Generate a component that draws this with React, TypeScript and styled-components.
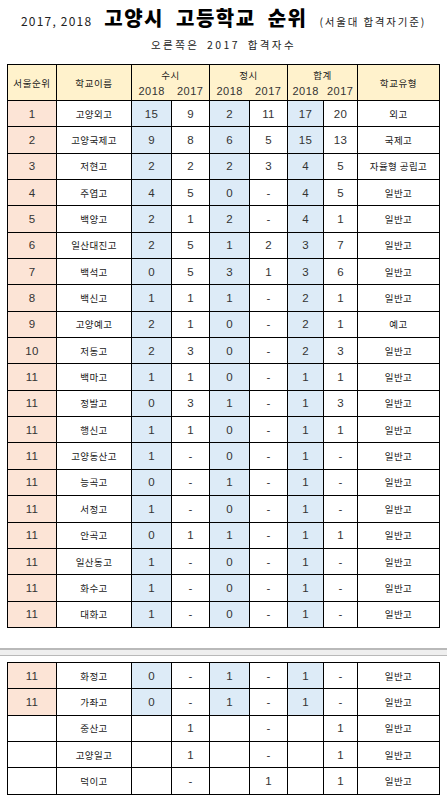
import React from "react";
import styled, { createGlobalStyle } from "styled-components";

type Tone = "rank" | "blue" | "plain";

type SchoolRow = {
    rank: string;
    name: string;
    values: string[]; // 수시18, 수시17, 정시18, 정시17, 합계18, 합계17
    kind: string;
    colored: boolean;
};

const row = (rank: string, name: string, values: string, kind: string, colored = true): SchoolRow => ({
    rank,
    name,
    values: values.split(" ").map(v => (v === "_" ? "" : v)),
    kind,
    colored,
});

const firstPage: SchoolRow[] = [
    row("1", "고양외고", "15 9 2 11 17 20", "외고"),
    row("2", "고양국제고", "9 8 6 5 15 13", "국제고"),
    row("3", "저현고", "2 2 2 3 4 5", "자율형 공립고"),
    row("4", "주엽고", "4 5 0 - 4 5", "일반고"),
    row("5", "백양고", "2 1 2 - 4 1", "일반고"),
    row("6", "일산대진고", "2 5 1 2 3 7", "일반고"),
    row("7", "백석고", "0 5 3 1 3 6", "일반고"),
    row("8", "백신고", "1 1 1 - 2 1", "일반고"),
    row("9", "고양예고", "2 1 0 - 2 1", "예고"),
    row("10", "저동고", "2 3 0 - 2 3", "일반고"),
    row("11", "백마고", "1 1 0 - 1 1", "일반고"),
    row("11", "정발고", "0 3 1 - 1 3", "일반고"),
    row("11", "행신고", "1 1 0 - 1 1", "일반고"),
    row("11", "고양동산고", "1 - 0 - 1 -", "일반고"),
    row("11", "능곡고", "0 - 1 - 1 -", "일반고"),
    row("11", "서정고", "1 - 0 - 1 -", "일반고"),
    row("11", "안곡고", "0 1 1 - 1 1", "일반고"),
    row("11", "일산동고", "1 - 0 - 1 -", "일반고"),
    row("11", "화수고", "1 - 0 - 1 -", "일반고"),
    row("11", "대화고", "1 - 0 - 1 -", "일반고"),
];

const secondPage: SchoolRow[] = [
    row("11", "화정고", "0 - 1 - 1 -", "일반고"),
    row("11", "가좌고", "0 - 1 - 1 -", "일반고"),
    row("", "중산고", "_ 1 _ - _ 1", "일반고", false),
    row("", "고양일고", "_ 1 _ - _ 1", "일반고", false),
    row("", "덕이고", "_ - _ 1 _ 1", "일반고", false),
];

const colWidths = [49, 75, 40, 38, 40, 38, 36, 34, 82];

export default function App() {
    return (
        <>
            <GlobalStyle />
            <TitleRow>
                <YearText>2017, 2018</YearText>
                <MainTitle>고양시 고등학교 순위</MainTitle>
                <Note>(서울대 합격자기준)</Note>
            </TitleRow>
            <Subtitle>오른쪽은 2017 합격자수</Subtitle>

            <SheetWrap>
                <Sheet>
                    <Columns />
                    <thead>
                        <HeadRow>
                            <HeadCell rowSpan={2}>서울순위</HeadCell>
                            <HeadCell rowSpan={2}>학교이름</HeadCell>
                            <GroupCell colSpan={2}>수시</GroupCell>
                            <GroupCell colSpan={2}>정시</GroupCell>
                            <GroupCell colSpan={2}>합계</GroupCell>
                            <HeadCell rowSpan={2}>학교유형</HeadCell>
                        </HeadRow>
                        <HeadRow>
                            {["수시", "정시", "합계"].map(group => (
                                <React.Fragment key={group}>
                                    <YearCell $side="left">2018</YearCell>
                                    <YearCell $side="right">2017</YearCell>
                                </React.Fragment>
                            ))}
                        </HeadRow>
                    </thead>
                    <tbody>
                        {firstPage.map((r, i) => (
                            <SchoolLine key={i} data={r} />
                        ))}
                    </tbody>
                </Sheet>
            </SheetWrap>

            <PageBreak />

            <SheetWrap>
                <Sheet>
                    <Columns />
                    <tbody>
                        {secondPage.map((r, i) => (
                            <SchoolLine key={i} data={r} />
                        ))}
                    </tbody>
                </Sheet>
            </SheetWrap>
        </>
    );
}

function Columns() {
    return (
        <colgroup>
            {colWidths.map((w, i) => (
                <col key={i} style={{ width: w }} />
            ))}
        </colgroup>
    );
}

function SchoolLine({ data }: { data: SchoolRow }) {
    return (
        <BodyRow>
            <Cell $tone={data.colored ? "rank" : "plain"} $num>{data.rank}</Cell>
            <Cell $tone="plain">{data.name}</Cell>
            {data.values.map((v, i) => (
                <Cell key={i} $tone={data.colored && i % 2 === 0 ? "blue" : "plain"} $num>
                    {v}
                </Cell>
            ))}
            <Cell $tone="plain">{data.kind}</Cell>
        </BodyRow>
    );
}

const GlobalStyle = createGlobalStyle`
    body {
        margin: 0;
        background: #ffffff;
        color: #1a1a1a;
        font-family: "Noto Sans CJK KR", "Noto Sans", sans-serif;
    }
`

const TitleRow = styled.div`
    display: flex;
    justify-content: center;
    align-items: baseline;
    column-gap: 12px;
    height: 34px;
    padding-top: 3px;
    box-sizing: border-box;
`

const YearText = styled.span`
    font-size: 12px;
    letter-spacing: 1.2px;
    color: #222;
`

const MainTitle = styled.span`
    font-size: 20px;
    font-weight: 900;
    letter-spacing: 1.5px;
    word-spacing: 6px;
    color: #000;
`

const Note = styled.span`
    font-size: 10.5px;
    letter-spacing: 1.8px;
    color: #222;
`

const Subtitle = styled.div`
    height: 22px;
    line-height: 22px;
    margin-bottom: 8px;
    text-align: center;
    font-size: 10.5px;
    letter-spacing: 2.4px;
    word-spacing: 3px;
    color: #222;
`

const SheetWrap = styled.div`
    padding-left: 7px;
`

const Sheet = styled.table`
    width: 433px;
    border-collapse: collapse;
    table-layout: fixed;
    border: 1px solid #000;
`

const HeadRow = styled.tr`
    height: 18px;
    background: #fff2cc;
`

const HeadCell = styled.th`
    padding: 0;
    border: 1px solid #000;
    font-size: 9.5px;
    font-weight: normal;
    letter-spacing: 0.6px;
    text-align: center;
`

const GroupCell = styled(HeadCell)`
    border-bottom: none;
    vertical-align: bottom;
    padding-bottom: 1px;
`

const YearCell = styled.th<{ $side: "left" | "right" }>`
    padding: 0;
    border: 1px solid #000;
    border-top: none;
    ${p => (p.$side === "left" ? "border-right: none;" : "border-left: none;")}
    font-family: "Liberation Sans", Arial, sans-serif;
    font-size: 11px;
    font-weight: normal;
    letter-spacing: 0.5px;
    color: #333;
    text-align: center;
    vertical-align: middle;
`

const BodyRow = styled.tr`
    height: 26.35px;
`

const toneColor: Record<Tone, string> = {
    rank: "#fce4d6",
    blue: "#ddebf7",
    plain: "#ffffff",
};

const Cell = styled.td<{ $tone: Tone; $num?: boolean }>`
    padding: 0;
    border: 1px solid #000;
    background: ${p => toneColor[p.$tone]};
    text-align: center;
    font-family: ${p => (p.$num ? `"Liberation Sans", Arial, sans-serif` : `"Noto Sans CJK KR", sans-serif`)};
    font-size: ${p => (p.$num ? "11.5px" : "9.5px")};
    letter-spacing: ${p => (p.$num ? "0.3px" : "0.4px")};
    color: ${p => (p.$num ? "#333" : "#1a1a1a")};
    white-space: nowrap;
`

const PageBreak = styled.div`
    height: 5px;
    margin: 20px 0 6px;
    background: #efefef;
    border-top: 2px solid #b9b9b9;
    border-bottom: 1px solid #b9b9b9;
`
